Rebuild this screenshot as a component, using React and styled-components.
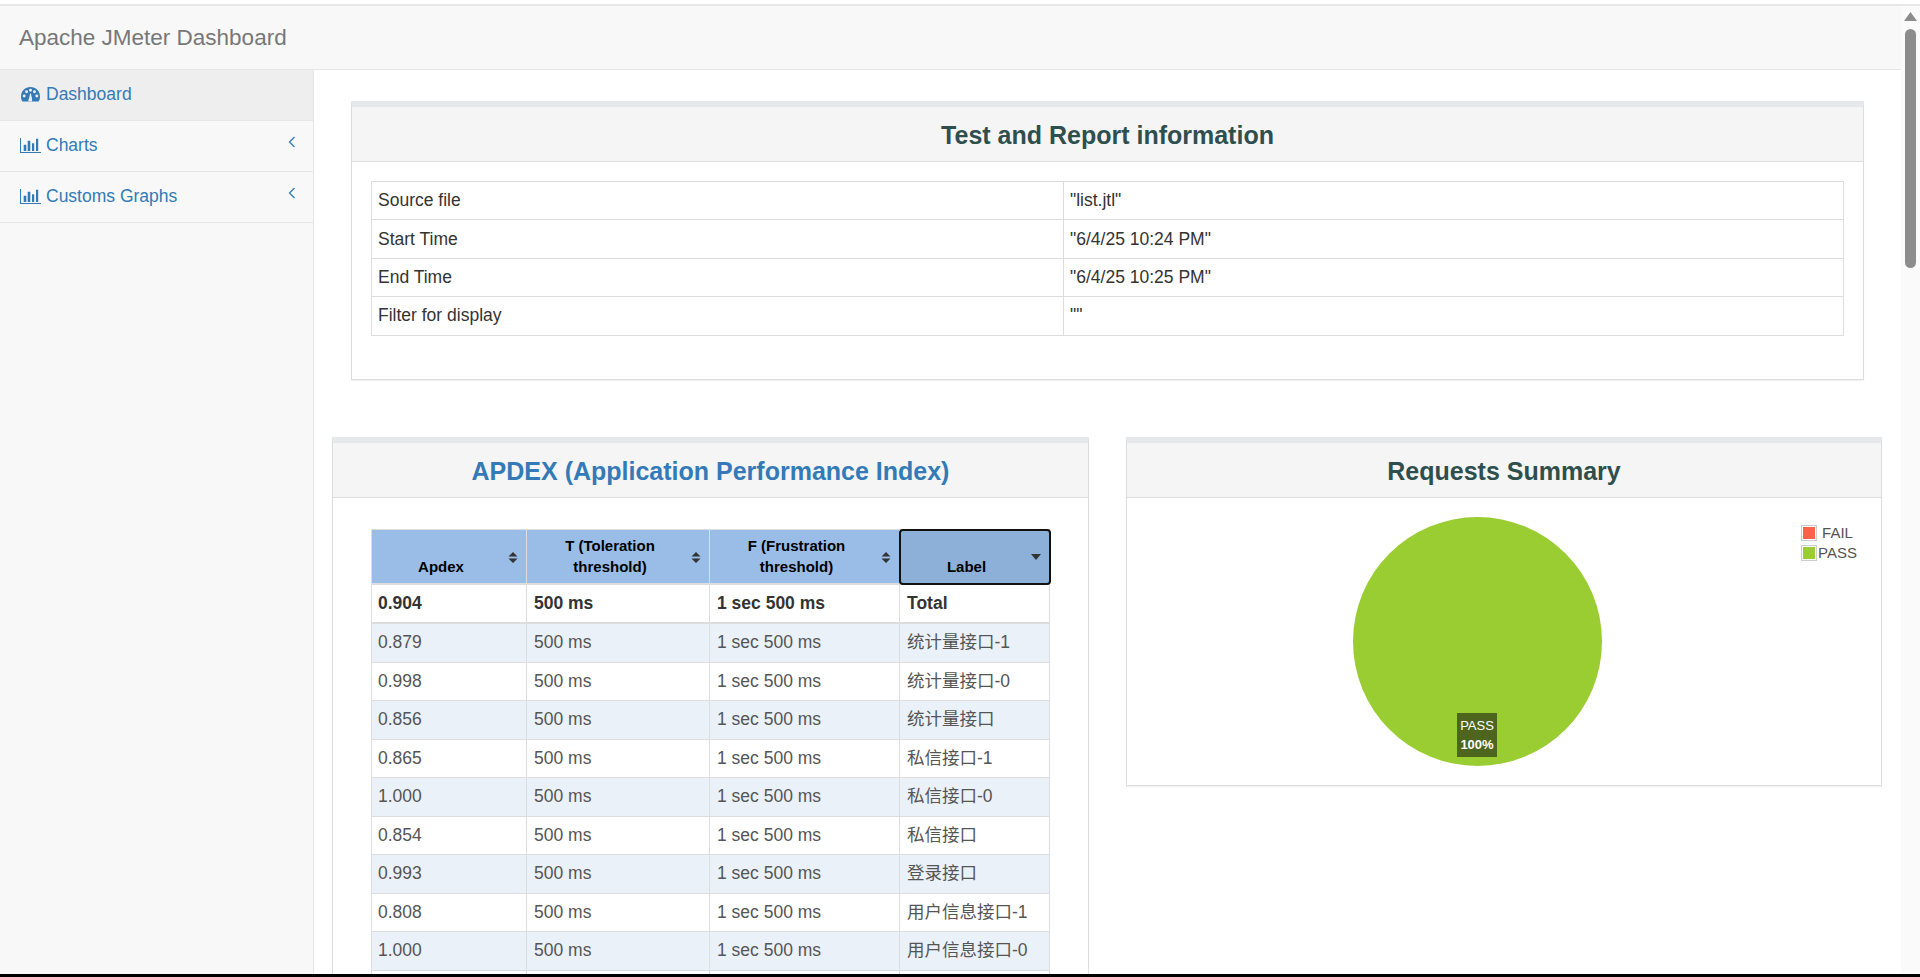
import React from 'react';
import styled, { createGlobalStyle } from 'styled-components';

const Global = createGlobalStyle`
  html, body { margin: 0; padding: 0; height: 100%; overflow: hidden; background: #fff; }
  body { font-family: "Liberation Sans", Arial, "Noto Sans CJK SC", sans-serif; font-size: 17.5px; line-height: 25px; color: #333; }
  * { box-sizing: border-box; }
`;

const Shell = styled.div`
  height: 977px; display: flex; flex-direction: column; overflow: hidden;
`;
const TopGap = styled.div`height: 4px; background: #fff; flex: none;`;
const Viewport = styled.div`flex: 1; min-height: 0; display: flex; overflow: hidden; border-top: 2px solid #e7e7e7;`;
const BottomEdge = styled.div`height: 3px; background: #000; flex: none;`;
const Page = styled.div`flex: 1; min-width: 0; display: flex; flex-direction: column; overflow: hidden;`;
const Navbar = styled.header`
  height: 64px; flex: none; background: #f8f8f8; border-bottom: 1px solid #e7e7e7;
  display: flex; align-items: center; padding: 0 19px 1px; font-size: 22.5px; color: #777;
`;
const Body = styled.div`flex: 1; min-height: 0; display: flex; overflow: hidden;`;
const Sidebar = styled.nav`width: 314px; flex: none; background: #f8f8f8; border-right: 1px solid #e7e7e7;`;
const NavItem = styled.a`
  height: 51px; display: flex; align-items: center; padding: 0 17px 1px 20px; gap: 5px; color: #337ab7;
  border-bottom: 1px solid #e7e7e7; background: ${p => (p.$active ? '#eee' : 'transparent')};
`;
const IconSlot = styled.span`width: 21px; flex: none; display: flex; justify-content: center; align-items: center;`;
const NavLabel = styled.span`flex: 1;`;
const Chevron = styled.svg`width: 8px; height: 12px; margin: -8px 0 0 0; flex: none;`;
const Content = styled.main`flex: 1; min-width: 0; padding: 31px 19px 0 18px; display: flex; flex-direction: column; gap: 57px;`;
const Panel = styled.section`
  border: 1px solid #ddd; background: #fff; box-shadow: 0 1px 1px rgba(0,0,0,.05);
  border-top: 6px solid #e6e9eb;
`;
const InfoPanel = styled(Panel)`margin: 0 18px 0 19px; height: 279px; flex: none;`;
const PanelHead = styled.div`
  height: ${p => p.$h}px; background: #f5f5f5; border-bottom: 1px solid #ddd; padding-top: 2px;
  display: flex; align-items: center; justify-content: center;
`;
const PanelTitle = styled.h3`
  margin: 0; font-size: 25px; line-height: 28px; font-weight: 700; color: ${p => (p.$link ? '#337ab7' : '#2f4f4f')};
`;
const InfoBody = styled.div`padding: 19px 19px;`;
const InfoTable = styled.table`
  width: 100%; border-collapse: collapse; table-layout: fixed; border: 1px solid #ddd;
  td { height: 38.4px; padding: 0 6px; border: 1px solid #ddd; color: #333; }
  td:first-child { width: 692px; }
`;
const Columns = styled.div`display: grid; grid-template-columns: 757px 756px; gap: 37px; align-items: start;`;
const ApdexBody = styled.div`padding: 31px 39px 0 38px;`;
const ApdexTable = styled.table`
  width: 678px; border-collapse: collapse; table-layout: fixed; color: #555;
`;
const Th = styled.th`
  position: relative; height: 54px; padding: 0 22px 6px 6px; vertical-align: bottom; text-align: center;
  font-size: 15px; line-height: 21px; color: #000; background: ${p => (p.$sorted ? '#8cb0d8' : '#99bde6')};
  border: 1px solid #ddd; border-bottom: 2px solid #ddd;
  ${p => p.$sorted && 'outline: 2px solid #111; outline-offset: -1px; border-radius: 3px;'}
`;
const SortIcon = styled.svg`position: absolute; right: 8px; top: 22px; width: 10px; height: 11px;`;
const Tr = styled.tr`background: ${p => (p.$odd ? '#eaf1f9' : '#fff')};`;
const Td = styled.td`
  height: ${p => (p.$total ? '39px' : p.$first ? '39.5px' : '38.5px')}; padding: 0 6px; border: 1px solid #ddd; white-space: nowrap;
  &:not(:first-child) { padding-left: 7px; }
  ${p => p.$total && 'font-weight: 700; color: #333; border-bottom: 2px solid #ddd;'}
`;
const ChartBody = styled.div`position: relative; height: 287px; display: flex; justify-content: flex-start; padding: 19px 0 0 226px;`;
const Legend = styled.div`
  position: absolute; top: 27px; right: 24px; display: flex; flex-direction: column; gap: 4px;
  font-size: 15px; line-height: 16px; color: #545454;
`;
const LegendRow = styled.div`display: flex; align-items: center; height: 16px;`;
const Swatch = styled.span`
  width: 16px; height: 16px; border: 1px solid #ccc; padding: 1px; display: block; margin-right: ${p => p.$gap}px;
  &::after { content: ''; display: block; width: 100%; height: 100%; background: ${p => p.$c}; }
`;
const PieWrap = styled.div`position: relative; width: 249px; height: 249px;`;
const Pie = styled.svg`display: block; width: 249px; height: 249px;`;
const PieLabel = styled.div`
  position: absolute; left: 104px; top: 196px; width: 40px; height: 44px; background: #4e651d;
  color: #fff; font-size: 13px; line-height: 19px; text-align: center; padding-top: 3px;
  span { display: block; font-weight: 700; }
`;
const ScrollTrack = styled.aside`width: 19px; flex: none; background: #fafafa; display: flex; flex-direction: column; align-items: center; padding-top: 6px;`;
const ScrollArrow = styled.svg`width: 13px; height: 9px; display: block;`;
const ScrollThumb = styled.div`width: 11px; height: 239px; margin-top: 8px; background: #8c8c8c; border-radius: 6px;`;

const GaugeIcon = () => (
  <svg width="19" height="14.5" viewBox="0.4 1.2 19.2 14.5" fill="#337ab7" aria-hidden="true">
    <path fillRule="evenodd" d="M10 1.2C4.6 1.2.4 5.4.4 10.6c0 1.9.5 3.6 1.4 5.1h16.4c.9-1.5 1.4-3.2 1.4-5.1C19.6 5.4 15.4 1.2 10 1.2ZM3.6 11.8a1.5 1.5 0 1 1 0-3 1.5 1.5 0 0 1 0 3Zm2.4-4.3a1.5 1.5 0 1 1 0-3 1.5 1.5 0 0 1 0 3Zm4-1.7a1.5 1.5 0 1 1 0-3 1.5 1.5 0 0 1 0 3Zm1.6 8.4a1.9 1.9 0 1 1-3.1-1.4l1.1-5.2h.8l1.1 5.2c.1.4.1.9.1 1.4Zm2.4-6.7a1.5 1.5 0 1 1 0-3 1.5 1.5 0 0 1 0 3Zm2.4 4.3a1.5 1.5 0 1 1 0-3 1.5 1.5 0 0 1 0 3Z" />
  </svg>
);
const BarsIcon = () => (
  <svg width="21" height="15" viewBox="0 0 21 15" fill="#337ab7" aria-hidden="true">
    <path d="M0 0h1v14h20v1H0z" />
    <path d="M3.7 6.7h2.6V13H3.7zM7.7 2.7h2.6V13H7.7zM12 5.3h2.2V13H12zM16 .7h2.2V13H16z" />
  </svg>
);
const ChevronIcon = () => (
  <Chevron viewBox="0 0 8 12" aria-hidden="true"><path d="M6.5 1 1.5 6l5 5" fill="none" stroke="#337ab7" strokeWidth="1.3" /></Chevron>
);
const Sort = ({ sorted }) => (
  <SortIcon viewBox="0 0 10 11" aria-hidden="true">
    {sorted ? <path d="M0 2h10L5 8z" fill="#333" /> : <path d="M5 0l4.5 4.6H.5zM.5 6.4h9L5 11z" fill="#333" />}
  </SortIcon>
);

const info = [
  ['Source file', '"list.jtl"'],
  ['Start Time', '"6/4/25 10:24 PM"'],
  ['End Time', '"6/4/25 10:25 PM"'],
  ['Filter for display', '""'],
];
const rows = [
  ['0.879', '统计量接口-1'], ['0.998', '统计量接口-0'], ['0.856', '统计量接口'],
  ['0.865', '私信接口-1'], ['1.000', '私信接口-0'], ['0.854', '私信接口'],
  ['0.993', '登录接口'], ['0.808', '用户信息接口-1'], ['1.000', '用户信息接口-0'], ['', ''],
];

export default function App() {
  return (
    <Shell>
      <Global />
      <TopGap />
      <Viewport>
        <Page>
          <Navbar>Apache JMeter Dashboard</Navbar>
          <Body>
            <Sidebar>
              <NavItem $active><IconSlot><GaugeIcon /></IconSlot><NavLabel>Dashboard</NavLabel></NavItem>
              <NavItem><IconSlot><BarsIcon /></IconSlot><NavLabel>Charts</NavLabel><ChevronIcon /></NavItem>
              <NavItem><IconSlot><BarsIcon /></IconSlot><NavLabel>Customs Graphs</NavLabel><ChevronIcon /></NavItem>
            </Sidebar>
            <Content>
              <InfoPanel>
                <PanelHead $h={55}><PanelTitle>Test and Report information</PanelTitle></PanelHead>
                <InfoBody>
                  <InfoTable><tbody>
                    {info.map(([k, v]) => <tr key={k}><td>{k}</td><td>{v}</td></tr>)}
                  </tbody></InfoTable>
                </InfoBody>
              </InfoPanel>
              <Columns>
                <Panel>
                  <PanelHead $h={55}><PanelTitle $link>APDEX (Application Performance Index)</PanelTitle></PanelHead>
                  <ApdexBody>
                    <ApdexTable>
                      <colgroup><col width="155" /><col width="183" /><col width="190" /><col width="150" /></colgroup>
                      <thead><tr>
                        <Th>Apdex<Sort /></Th>
                        <Th>T (Toleration threshold)<Sort /></Th>
                        <Th>F (Frustration threshold)<Sort /></Th>
                        <Th $sorted>Label<Sort sorted /></Th>
                      </tr></thead>
                      <tbody>
                        <Tr>
                          <Td $total>0.904</Td><Td $total>500 ms</Td><Td $total>1 sec 500 ms</Td><Td $total>Total</Td>
                        </Tr>
                        {rows.map(([a, l], i) => (
                          <Tr key={i} $odd={i % 2 === 0}>
                            <Td $first={i === 0}>{a}</Td><Td $first={i === 0}>{a && '500 ms'}</Td><Td $first={i === 0}>{a && '1 sec 500 ms'}</Td><Td $first={i === 0}>{l}</Td>
                          </Tr>
                        ))}
                      </tbody>
                    </ApdexTable>
                  </ApdexBody>
                </Panel>
                <Panel>
                  <PanelHead $h={55}><PanelTitle>Requests Summary</PanelTitle></PanelHead>
                  <ChartBody>
                    <PieWrap>
                      <Pie viewBox="0 0 249 249" aria-hidden="true"><circle cx="124.5" cy="124.5" r="124.5" fill="#9acd32" /></Pie>
                      <PieLabel>PASS<span>100%</span></PieLabel>
                    </PieWrap>
                    <Legend>
                      <LegendRow><Swatch $c="#ff6347" $gap={5} />FAIL</LegendRow>
                      <LegendRow><Swatch $c="#9acd32" $gap={1} />PASS</LegendRow>
                    </Legend>
                  </ChartBody>
                </Panel>
              </Columns>
            </Content>
          </Body>
        </Page>
        <ScrollTrack>
          <ScrollArrow viewBox="0 0 13 9" aria-hidden="true"><path d="M6.5 0 13 9H0z" fill="#8c8c8c" /></ScrollArrow>
          <ScrollThumb />
        </ScrollTrack>
      </Viewport>
      <BottomEdge />
    </Shell>
  );
}
